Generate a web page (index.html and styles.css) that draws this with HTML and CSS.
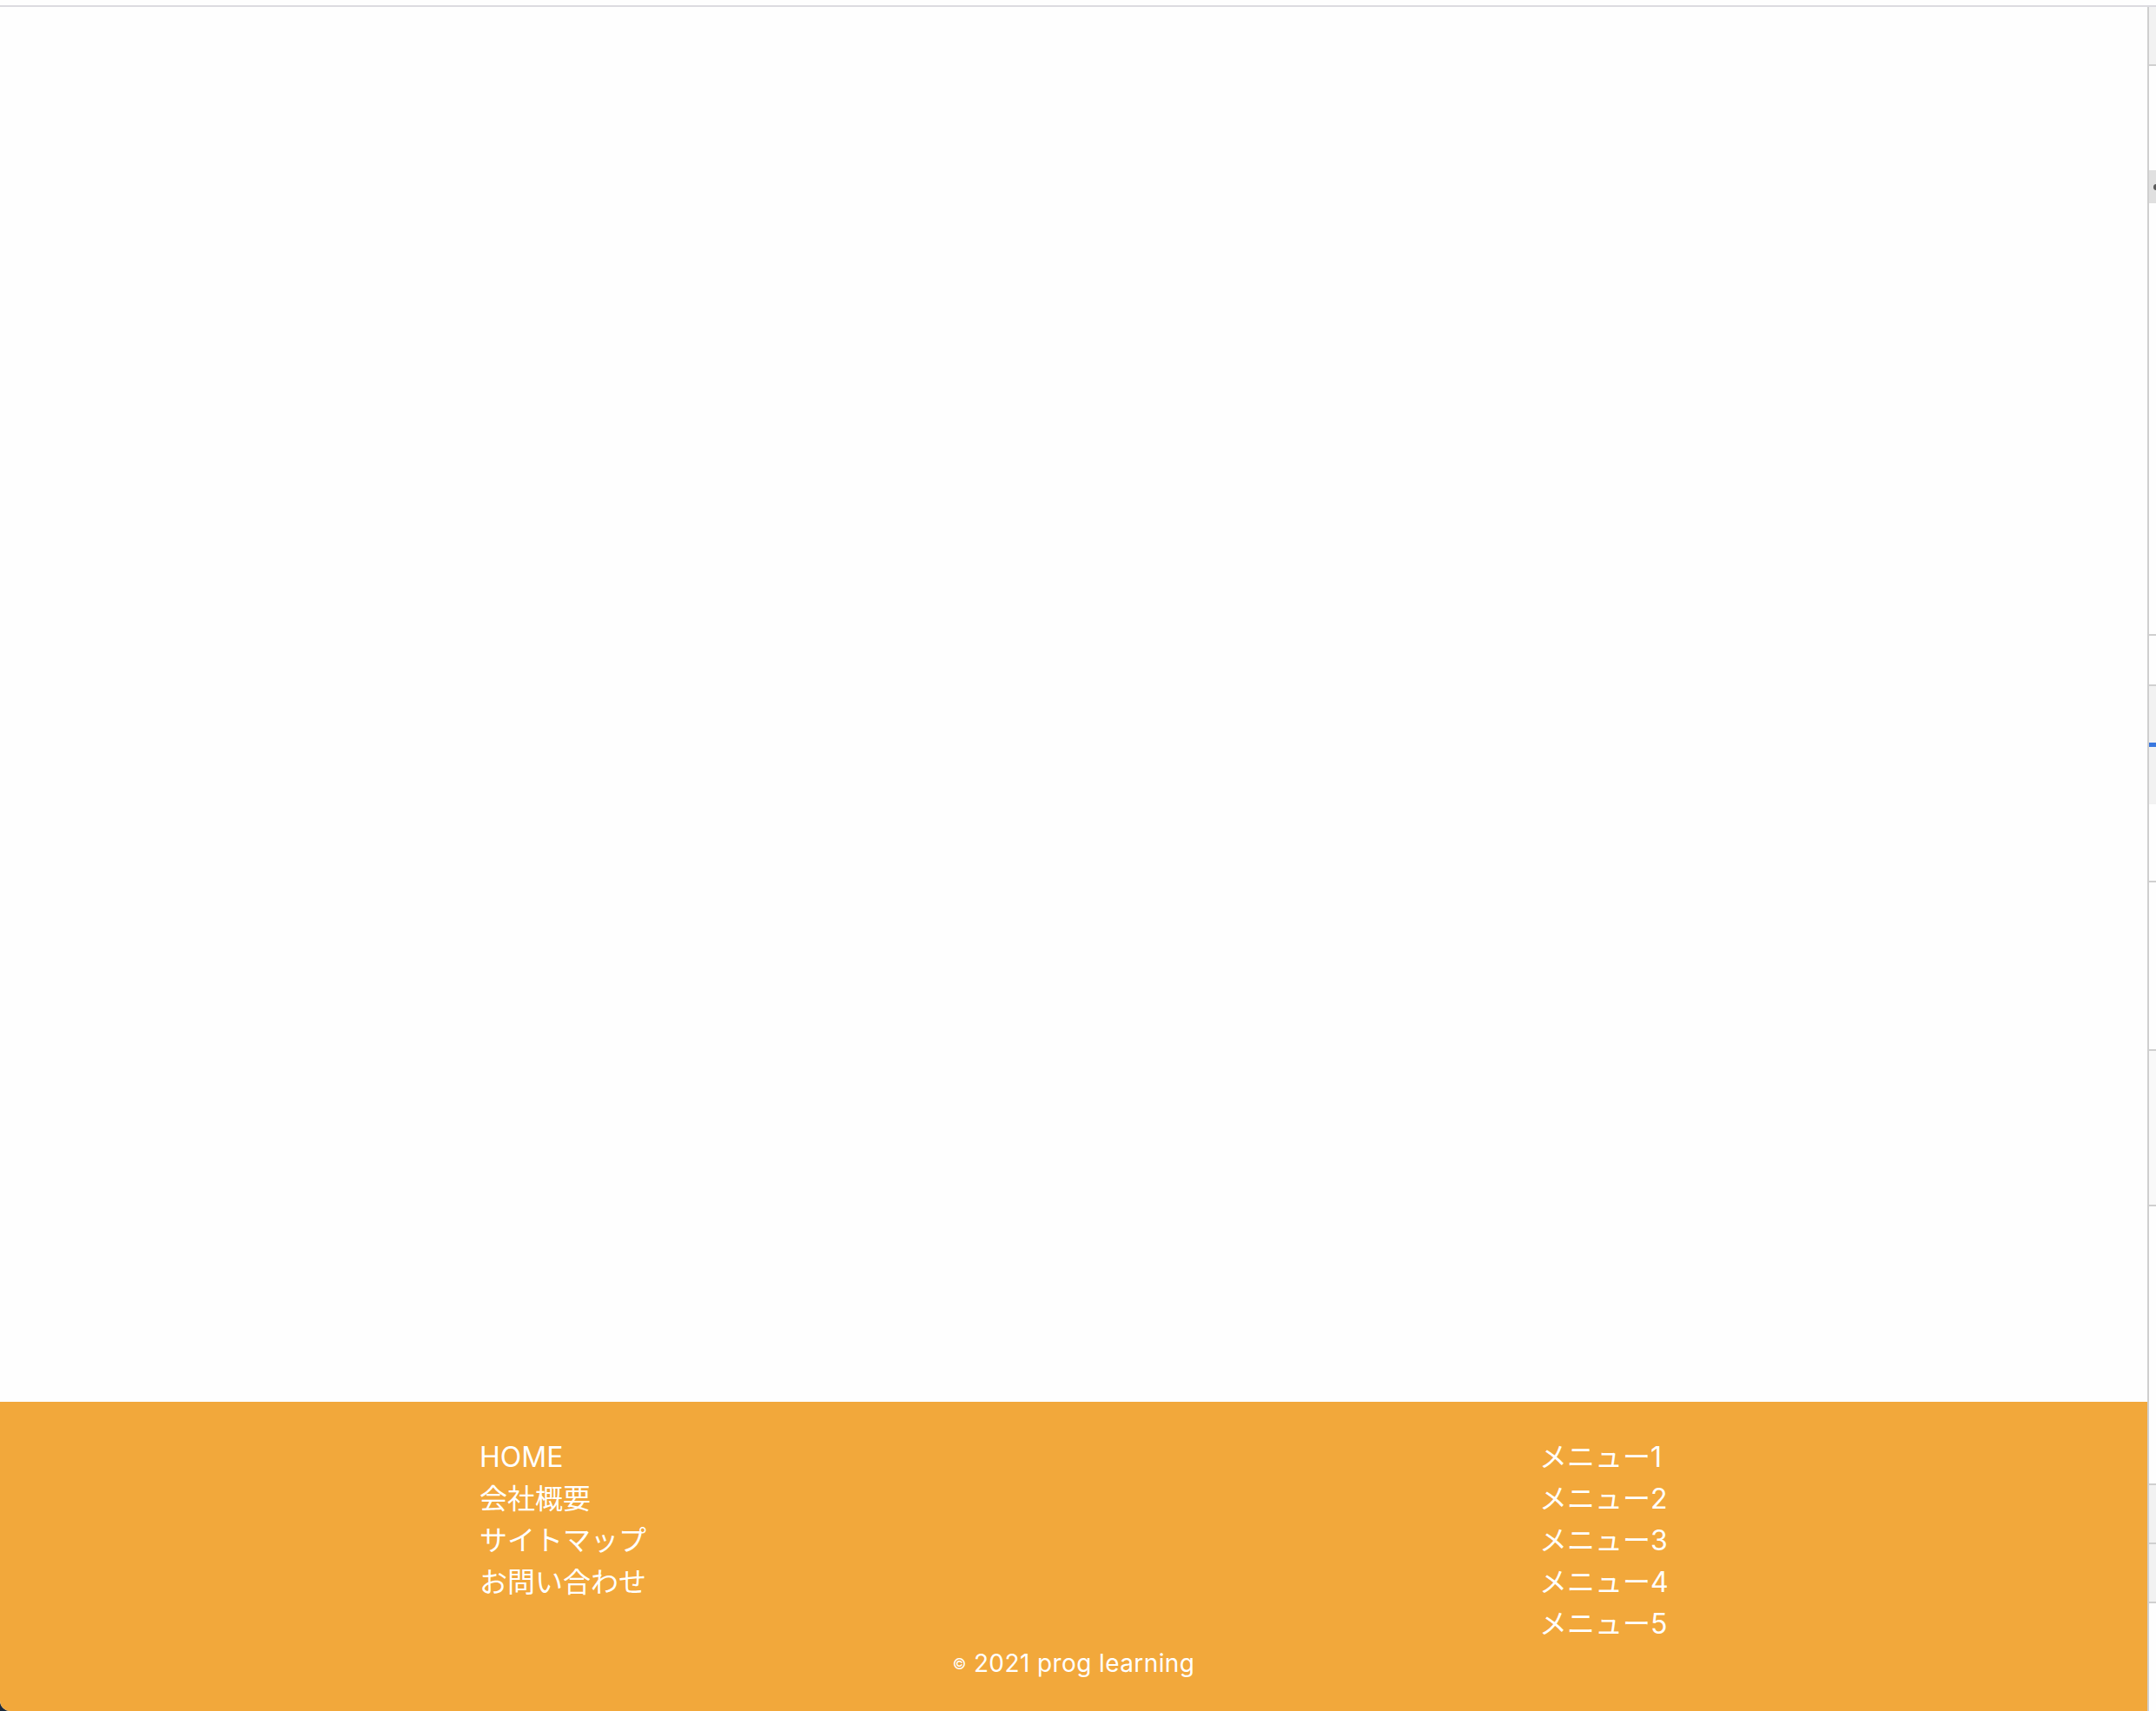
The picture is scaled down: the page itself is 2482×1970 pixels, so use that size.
FILE: index.html
```html
<!DOCTYPE html>
<html lang="ja">
<head>
<meta charset="utf-8">
<title>prog learning</title>
<link rel="stylesheet" href="styles.css">
</head>
<body>
<div class="screen">
  <div class="topbar"></div>
  <div class="window">
    <div class="page">
      <main class="main"></main>
      <footer class="footer">
        <div class="footer-nav">
          <ul class="nav-list">
            <li><a href="#">HOME</a></li>
            <li><a href="#">会社概要</a></li>
            <li><a href="#">サイトマップ</a></li>
            <li><a href="#">お問い合わせ</a></li>
          </ul>
          <ul class="nav-list">
            <li><a href="#">メニュー1</a></li>
            <li><a href="#">メニュー2</a></li>
            <li><a href="#">メニュー3</a></li>
            <li><a href="#">メニュー4</a></li>
            <li><a href="#">メニュー5</a></li>
          </ul>
        </div>
        <p class="copyright"><span class="copy-mark">©</span> 2021 prog learning</p>
      </footer>
    </div>
    <div class="divider"></div>
    <div class="strip">
      <div class="seg seg-gray h66"></div>
      <div class="seg-line"></div>
      <div class="seg h120"></div>
      <div class="seg seg-tab h38"><span class="dot"></span></div>
      <div class="seg h496"></div>
      <div class="seg-line"></div>
      <div class="seg h56"></div>
      <div class="seg-line"></div>
      <div class="seg seg-gray h136"><span class="blue-bar"></span></div>
      <div class="seg h88"></div>
      <div class="seg-line"></div>
      <div class="seg h192"></div>
      <div class="seg-line"></div>
      <div class="seg seg-light h177"></div>
      <div class="seg-line"></div>
      <div class="seg h319"></div>
      <div class="seg-line"></div>
      <div class="seg seg-gray h66"></div>
      <div class="seg-line"></div>
      <div class="seg seg-gray h66"></div>
      <div class="seg-line"></div>
      <div class="seg fill"></div>
    </div>
  </div>
</div>
</body>
</html>
```

FILE: styles.css
```css
html {
  background: #1c2a3c;
}
body {
  margin: 0;
  font-family: "Inter", "Noto Sans CJK JP", sans-serif;
}
.screen {
  height: 1970px;
  display: flex;
  flex-direction: column;
  background: #fefefe;
  border-bottom-left-radius: 12px;
  overflow: hidden;
}
.topbar {
  height: 6px;
  flex: 0 0 auto;
  background: #fefefe;
  border-bottom: 2px solid #dcdbe0;
}
.window {
  flex: 1;
  display: flex;
  min-height: 0;
}
.page {
  flex: 1;
  display: flex;
  flex-direction: column;
}
.main {
  flex: 1;
  background: #fefefe;
}
.footer {
  background: #f2a83b;
  color: #fff;
  padding: 40px 0 33px;
}
.footer-nav {
  width: 1368px;
  margin: 0 auto;
  display: grid;
  grid-template-columns: 1220px 148px;
}
.nav-list {
  list-style: none;
  margin: 0;
  padding: 0;
}
.nav-list li {
  font-size: 32px;
  line-height: 48px;
  height: 48px;
  white-space: nowrap;
}
.nav-list a {
  color: #fff;
  text-decoration: none;
}
.copyright {
  margin: 0;
  text-align: center;
  font-size: 28px;
  line-height: 42px;
  letter-spacing: 0.4px;
}
.copy-mark {
  font-size: 17px;
  vertical-align: 3px;
}
.divider {
  width: 2px;
  flex: 0 0 2px;
  background: #cfcfcf;
}
.strip {
  width: 8px;
  flex: 0 0 8px;
  display: flex;
  flex-direction: column;
  background: #fefefe;
}
.seg {
  flex: 0 0 auto;
  position: relative;
  overflow: hidden;
}
.seg-line {
  flex: 0 0 2px;
  background: #d0d0d0;
}
.seg-gray { background: #f2f2f2; }
.seg-light { background: #f9f9f9; }
.seg-tab { background: #e0e0e0; }
.fill { flex: 1; }
.h38 { height: 38px; }
.h56 { height: 56px; }
.h66 { height: 66px; }
.h88 { height: 88px; }
.h120 { height: 120px; }
.h136 { height: 136px; }
.h177 { height: 177px; }
.h192 { height: 192px; }
.h319 { height: 319px; }
.h496 { height: 496px; }
.dot {
  position: absolute;
  left: 5px;
  top: 16px;
  width: 7px;
  height: 7px;
  border-radius: 50%;
  background: #5a5a5a;
}
.blue-bar {
  position: absolute;
  left: 0;
  right: 0;
  top: 65px;
  height: 5px;
  background: #3a78df;
}
```
